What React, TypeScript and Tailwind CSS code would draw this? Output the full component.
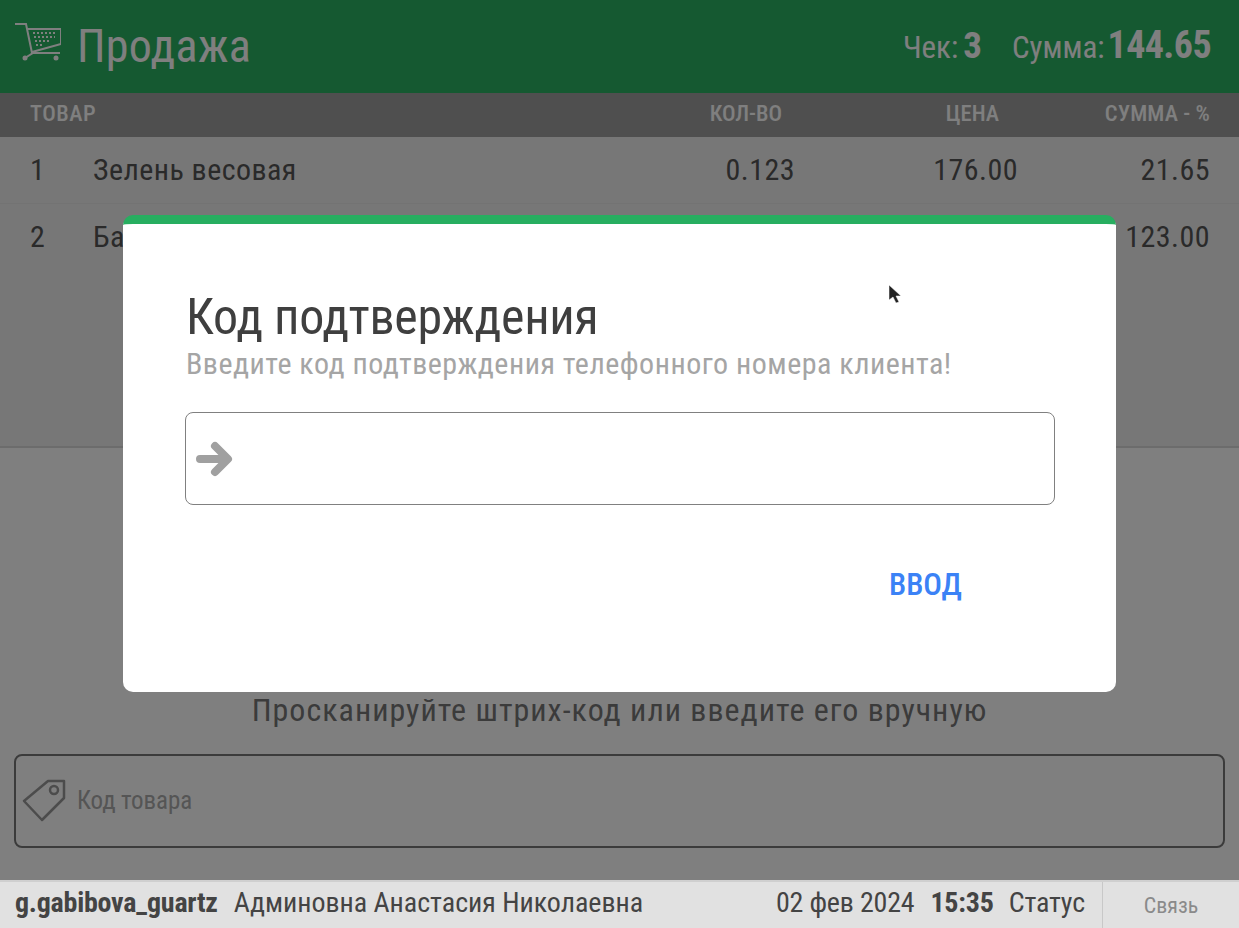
function Cart() {
  return (
    <svg width="46" height="46" viewBox="0 0 46 46" fill="none" stroke="#fff" strokeWidth="2">
      <path d="M0 1h11l6 29" />
      <path d="M13 6h33v15l-29 8" />
      <circle cx="10" cy="35" r="2.5" fill="#fff" stroke="none" />
      <circle cx="41" cy="35" r="2.5" fill="#fff" stroke="none" />
      <path d="M10 35 18 30h27" />
      <path d="M18 10h23M19 14h21M20 18h14M21 22h8" strokeDasharray="2 2" strokeWidth="2" />
    </svg>
  );
}

function Row({ n, name, qty, price, sum, last }: { n: string; name: string; qty: string; price: string; sum: string; last?: boolean }) {
  return (
    <div className={`flex h-[67px] items-center pb-[2px] text-[30px] tracking-[0.45px] text-[#555] ${last ? '' : 'border-b border-[#e6e6e6]'}`}>
      <div className="w-[93px] pl-[30px]">{n}</div>
      <div className="flex-1">{name}</div>
      <div className="w-[120px] text-right">{qty}</div>
      <div className="w-[223px] text-right">{price}</div>
      <div className="w-[221px] pr-[29px] text-right">{sum}</div>
    </div>
  );
}

export default function App() {
  return (
    <div className="relative flex h-[928px] w-[1239px] flex-col overflow-hidden bg-white font-['Roboto',sans-serif] font-stretch-condensed whitespace-nowrap">
      <div className="relative flex h-[880px] flex-col">
        <header className="flex h-[93px] items-center justify-between bg-[#2bb263] pl-[15px] pr-[28px] pb-[2px] text-white">
          <div className="flex items-center gap-[16px]">
            <Cart />
            <span className="text-[46px] leading-none tracking-[0.3px]">Продажа</span>
          </div>
          <div className="flex items-baseline text-[31px]">
            <span>Чек:</span>
            <span className="ml-[5px] text-[37px] font-bold">3</span>
            <span className="ml-[30px]">Сумма:</span>
            <span className="ml-[3px] text-[38px] font-bold tracking-[-0.6px]">144.65</span>
          </div>
        </header>
        <div className="flex h-[44px] items-center bg-[#9e9e9e] pb-[2px] text-[22.5px] font-medium text-white">
          <div className="flex-1 pl-[30px] tracking-[0.5px]">ТОВАР</div>
          <div className="w-[120px] pr-[13px] text-right">КОЛ-ВО</div>
          <div className="w-[223px] pr-[19px] text-right">ЦЕНА</div>
          <div className="w-[221px] pr-[29px] text-right tracking-[0.1px]">СУММА - %</div>
        </div>
        <div className="h-[311px] border-b-2 border-[#d8d8d8] bg-[#efefef]">
          <Row n="1" name="Зелень весовая" qty="0.123" price="176.00" sum="21.65" />
          <Row n="2" name="Батон" qty="1.000" price="123.00" sum="123.00" last />
        </div>
        <div className="flex flex-1 flex-col justify-end px-[14px] pb-[32px]">
          <p className="mb-[26px] text-center text-[32px] leading-[36px] tracking-[1px] text-[#777]">Просканируйте штрих-код или введите его вручную</p>
          <div className="flex h-[94px] items-center gap-[11px] rounded-[8px] border-2 border-[#777] pl-[6px]">
            <svg width="44" height="44" viewBox="0 0 44 44" fill="none" stroke="#999" strokeWidth="2.5" strokeLinejoin="round">
              <path d="M2 22 26 2h16v17L20 41Z" />
              <circle cx="32" cy="11" r="4" />
            </svg>
            <span className="text-[25px] tracking-[-0.1px] text-[#aaa]">Код товара</span>
          </div>
        </div>
        <div className="absolute inset-0 flex items-start justify-center bg-black/50">
          <div className="relative mt-[215px] h-[477px] w-[993px] rounded-[10px] border-t-[9px] border-[#27ae60] bg-white pl-[62px] pr-[61px] pt-[65px]">
            <h2 className="pl-[1px] text-[50px] leading-[56px] tracking-[-0.25px] text-[#3f3f3f]">Код подтверждения</h2>
            <p className="pl-[1px] pt-[1px] text-[30px] leading-[36px] tracking-[0.49px] text-[#a5a5a5]">Введите код подтверждения телефонного номера клиента!</p>
            <div className="mt-[30px] flex h-[93px] items-center rounded-[8px] border-[1.5px] border-[#808080] bg-white pl-[8px]">
              <svg width="40" height="40" viewBox="0 0 40 40" fill="none" stroke="#a0a0a0" strokeWidth="8" strokeLinecap="round" strokeLinejoin="round">
                <path d="M6 20h27M21 7l13 13-13 13" />
              </svg>
            </div>
            <div className="mt-[58px] pl-[704px] text-[31px] font-medium leading-[44px] text-[#3b82f6]">ВВОД</div>
            <svg className="absolute left-[765px] top-[60px]" width="14" height="20" viewBox="0 0 14 20" fill="#222" stroke="#fff" strokeWidth="0.5">
              <path d="M1 1v15l4-3 3 6 3-1-3-6h5Z" />
            </svg>
          </div>
        </div>
      </div>
      <footer className="flex h-[48px] items-center border-t-2 border-[#cfcfcf] bg-[#e1e1e1] pl-[15px] text-[28px] text-[#444]">
        <span className="pb-[4px] font-bold tracking-[-0.25px]">g.gabibova_guartz</span>
        <span className="ml-[16px] pb-[4px] tracking-[-0.03px]">Админовна Анастасия Николаевна</span>
        <div className="flex-1" />
        <span className="pb-[4px] tracking-[-0.2px]">02 фев 2024</span>
        <span className="ml-[16px] pb-[4px] font-bold tracking-[-0.2px]">15:35</span>
        <span className="ml-[15px] pb-[4px] tracking-[-0.15px]">Статус</span>
        <div className="ml-[17px] flex h-full w-[137px] items-center justify-center border-l border-[#c8c8c8] text-[22px] text-[#8a8a8a]">Связь</div>
      </footer>
    </div>
  );
}
